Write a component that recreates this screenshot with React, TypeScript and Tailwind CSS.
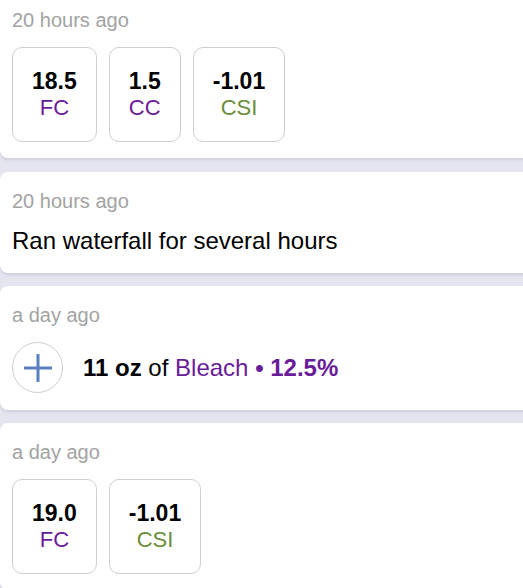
import React from "react";

const font = { fontFamily: '"Liberation Sans", Arial, sans-serif' };

type Stat = { value: string; label: string; kind: "chlorine" | "csi" };

function StatBox({ stat }: { stat: Stat }) {
  return (
    <div className="flex flex-col items-center rounded-[10px] border border-[#cfcfcf] px-[19px] pt-[19px] pb-[20px]">
      <div className="text-[23px] leading-[28px] font-bold text-black">{stat.value}</div>
      <div
        className={
          stat.kind === "csi"
            ? "text-[22px] leading-[26px] text-[#6b8e3a]"
            : "text-[22px] leading-[26px] text-[#6a1b9a]"
        }
      >
        {stat.label}
      </div>
    </div>
  );
}

function Card({ time, children, first }: { time: string; children: React.ReactNode; first?: boolean }) {
  return (
    <div
      className={
        first
          ? "-mt-[9px] mr-[-12px] rounded-lg bg-white pl-3 pt-[15px] shadow-[0_2px_3px_rgba(60,60,100,0.12)]"
          : "mr-[-12px] rounded-lg bg-white pl-3 pt-[15px] shadow-[0_2px_3px_rgba(60,60,100,0.12)]"
      }
    >
      <div className="text-[20px] leading-[28px] text-[#a3a3a3]">{time}</div>
      {children}
    </div>
  );
}

export default function App() {
  return (
    <div className="h-[588px] w-[523px] overflow-hidden bg-[#e4e5ef]" style={font}>
      <div className="flex flex-col gap-[13px]">
        <div className="pb-px">
          <Card time="20 hours ago" first>
            <div className="mt-[13px] flex gap-3 pb-4">
              <StatBox stat={{ value: "18.5", label: "FC", kind: "chlorine" }} />
              <StatBox stat={{ value: "1.5", label: "CC", kind: "chlorine" }} />
              <StatBox stat={{ value: "-1.01", label: "CSI", kind: "csi" }} />
            </div>
          </Card>
        </div>

        <Card time="20 hours ago">
          <div className="mt-[10px] pb-4 text-[24px] leading-[32px] text-black">
            Ran waterfall for several hours
          </div>
        </Card>

        <Card time="a day ago">
          <div className="mt-[13px] flex items-center gap-5 pb-[17px]">
            <div className="flex h-[51px] w-[51px] items-center justify-center rounded-full border border-[#cfcfcf]">
              <svg width="30" height="30" viewBox="0 0 30 30">
                <path d="M15 1V29M1 15H29" stroke="#5b80c2" strokeWidth="3" />
              </svg>
            </div>
            <div className="text-[24px] leading-[32px] text-black">
              <span className="font-bold">11 oz</span> of{" "}
              <span className="text-[#6a1b9a]">Bleach</span>{" "}
              <span className="font-bold text-[#6a1b9a]">• 12.5%</span>
            </div>
          </div>
        </Card>

        <Card time="a day ago">
          <div className="mt-[13px] flex gap-3 pb-4">
            <StatBox stat={{ value: "19.0", label: "FC", kind: "chlorine" }} />
            <StatBox stat={{ value: "-1.01", label: "CSI", kind: "csi" }} />
          </div>
        </Card>
      </div>
    </div>
  );
}
